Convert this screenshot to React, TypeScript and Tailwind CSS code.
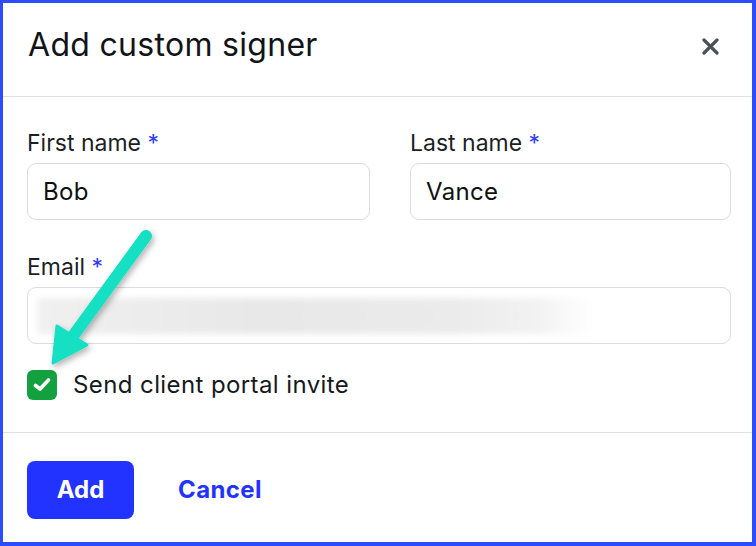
import React from "react";

function Label({ text }: { text: string }) {
  return (
    <div className="text-[23px] leading-[28px] text-[#1b1f24]">
      {text} <span className="text-[#2f3cff]">*</span>
    </div>
  );
}

function Field({ label, value }: { label: string; value?: string }) {
  return (
    <div>
      <Label text={label} />
      <div className="mt-[6px] h-[57px] rounded-[9px] border border-[#dcdcdc] flex items-center px-[15px] text-[24px] tracking-[0.3px] text-[#111]">
        {value}
      </div>
    </div>
  );
}

export default function App() {
  return (
    <div className="w-[756px] h-[546px] bg-[#2b4cff] pl-[3px] pt-[3px] pr-[4px] pb-[4px]" style={{ fontFamily: "Inter, 'Noto Sans', sans-serif" }}>
      <div className="relative w-full h-full bg-white flex flex-col">
        <div className="h-[94px] flex items-start justify-between pl-[25px] pr-[33px] pt-[22px] border-b border-[#e0e0e0] shrink-0">
          <div className="text-[32px] leading-[40px] tracking-[0.3px] text-[#111418]">Add custom signer</div>
          <svg width="17" height="17" viewBox="0 0 17 17" className="mt-[13px]">
            <path d="M2 2 L15 15 M15 2 L2 15" stroke="#4b5059" strokeWidth="3.2" strokeLinecap="round" />
          </svg>
        </div>
        <div className="flex-1 pl-[24px] pr-[21px] pt-[32px]">
          <div className="grid grid-cols-[343px_321px] gap-x-[40px]">
            <Field label="First name" value="Bob" />
            <Field label="Last name" value="Vance" />
          </div>
          <div className="mt-[33px]">
            <Label text="Email" />
            <div className="mt-[6px] h-[57px] rounded-[9px] border border-[#dcdcdc] flex items-center px-[9px]">
              <div className="h-[36px] w-[555px] blur-[3px] rounded-[4px]" style={{ background: "linear-gradient(90deg,#f0f0f0 0%,#e8e8e8 40%,#ebebeb 75%,#f2f2f2 90%,#ffffff 100%)" }} />
            </div>
          </div>
          <div className="mt-[23px] flex items-center gap-[16px]">
            <div className="w-[30px] h-[30px] rounded-[6px] bg-[#13a03f] flex items-center justify-center">
              <svg width="18" height="18" viewBox="0 0 18 18">
                <path d="M2.5 9.5 L7 13 L15.5 4" fill="none" stroke="white" strokeWidth="3.6" strokeLinecap="round" strokeLinejoin="round" />
              </svg>
            </div>
            <div className="text-[24px] tracking-[0.4px] text-[#151a20]">Send client portal invite</div>
          </div>
        </div>
        <div className="h-[110px] border-t border-[#e0e0e0] pl-[24px] pt-[28px] flex items-start gap-[44px] shrink-0">
          <button className="h-[58px] w-[107px] rounded-[8px] bg-[#2233ff] text-white text-[24px] font-bold">Add</button>
          <button className="h-[58px] text-[#2233ff] text-[24px] font-bold tracking-[0.4px]">Cancel</button>
        </div>
        <svg className="absolute left-0 top-0 pointer-events-none" width="200" height="400" viewBox="0 0 200 400">
          <defs>
            <filter id="sh" x="-50%" y="-50%" width="200%" height="200%">
              <feDropShadow dx="2" dy="3" stdDeviation="3" floodColor="#000" floodOpacity="0.3" />
            </filter>
          </defs>
          <g filter="url(#sh)">
            <path d="M143 233 L70 333" stroke="#14e0c3" strokeWidth="12" strokeLinecap="round" />
            <path d="M50 360 L54 323 L84 342 Z" fill="#14e0c3" stroke="#14e0c3" strokeWidth="3" strokeLinejoin="round" />
          </g>
        </svg>
      </div>
    </div>
  );
}
